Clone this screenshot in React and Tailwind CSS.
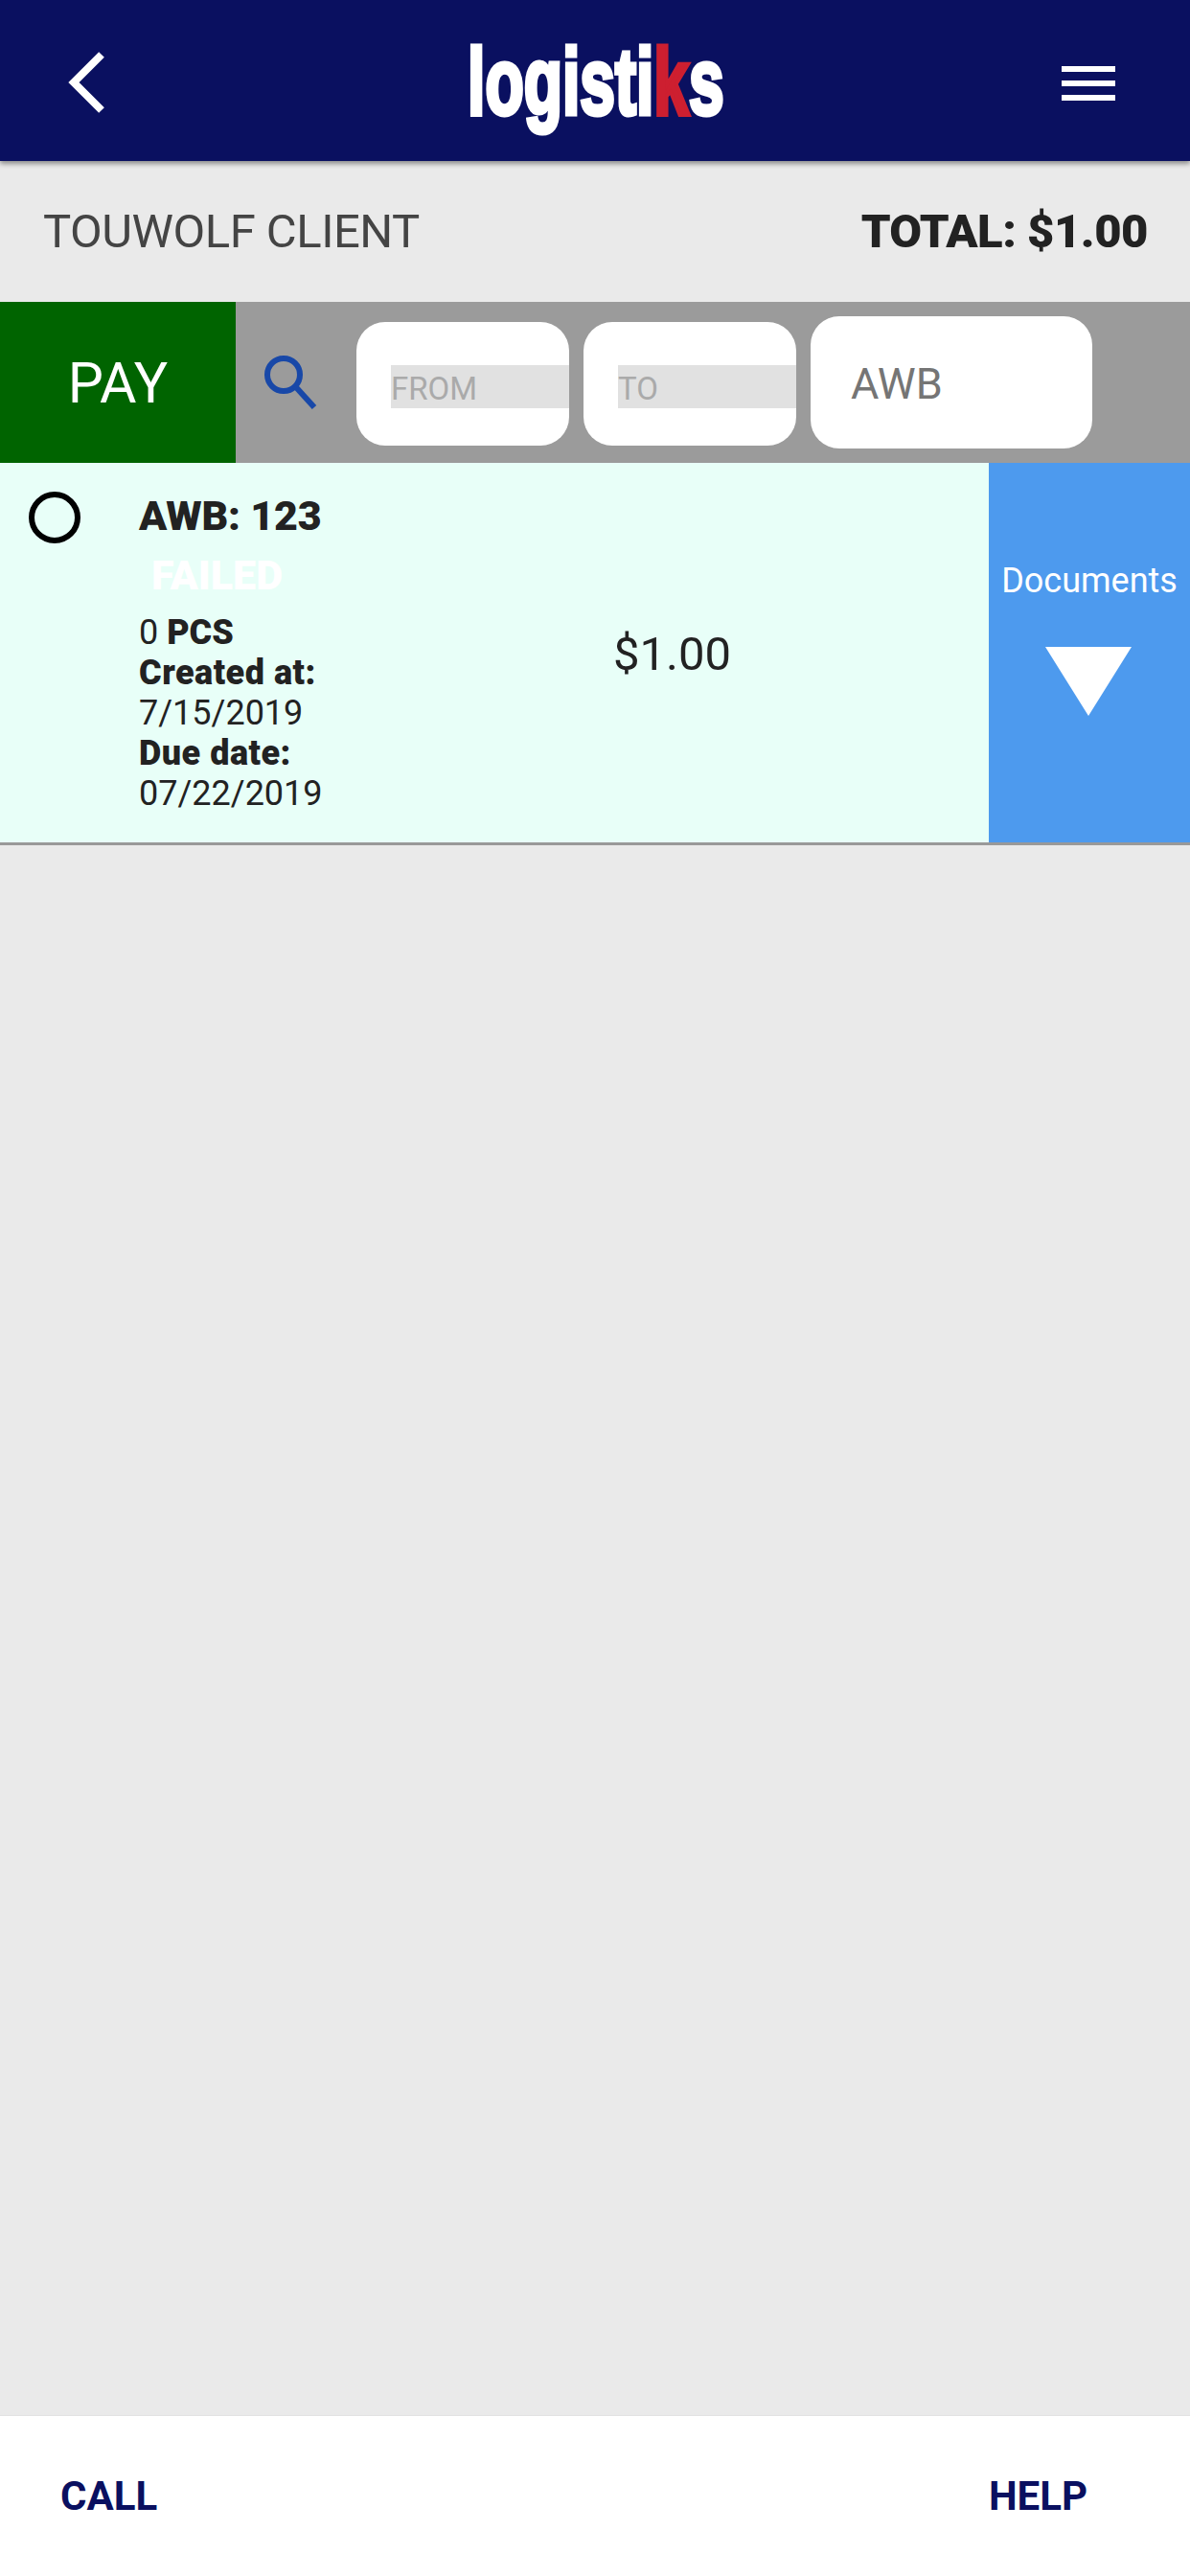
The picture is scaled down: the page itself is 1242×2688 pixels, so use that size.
import React from 'react';

const Logo = () => (
  <div className="w-[268px] ml-[10px] flex justify-center">
    <span className="shrink-0 whitespace-nowrap scale-x-[0.666] font-['Liberation_Sans',sans-serif] font-bold text-[99px] leading-none text-white [-webkit-text-stroke:5px_#ffffff]">
      logisti<span className="text-[#cd1f30] [-webkit-text-stroke:5px_#cd1f30]">k</span>s
    </span>
  </div>
);

const DateField = ({ label }) => (
  <div className="w-[222px] h-[129px] mt-[3px] bg-white rounded-[30px] flex items-center pl-[36px]">
    <div className="flex-1 h-[45px] mt-[6px] bg-[#e1e1e1] flex items-center text-[33px] leading-none text-[#aaaaaa]">
      <span className="pt-[4px]">{label}</span>
    </div>
  </div>
);

const App = () => {
  return (
    <div className="h-[2688px] flex flex-col bg-[#eaeaea] font-['Roboto',sans-serif] overflow-hidden">
      {/* Header */}
      <header className="relative h-[168px] shrink-0 bg-[#0a1060] shadow-[0_3px_5px_rgba(0,0,0,0.4)] grid grid-cols-[1fr_auto_1fr] items-center pl-[70px] pr-[78px]">
        <svg width="40" height="64" viewBox="0 0 40 64" fill="none" className="mt-[3px]">
          <path d="M36 3 L7 32 L36 61" stroke="white" strokeWidth="8" />
        </svg>
        <Logo />
        <div className="flex flex-col gap-[9px] mt-[6px] justify-self-end">
          <div className="w-[56px] h-[6px] bg-white" />
          <div className="w-[56px] h-[6px] bg-white" />
          <div className="w-[56px] h-[6px] bg-white" />
        </div>
      </header>

      {/* Client + total */}
      <div className="h-[147px] shrink-0 flex items-center justify-between pl-[45px] pr-[44px] text-[49px] leading-none">
        <span className="text-[#444444] tracking-[-0.5px]">TOUWOLF CLIENT</span>
        <span className="font-black text-[#222222] tracking-[-0.5px]">TOTAL: $1.00</span>
      </div>

      {/* Filters */}
      <div className="h-[168px] shrink-0 bg-[#9b9b9b] flex items-center">
        <div className="w-[246px] h-full bg-[#006400] flex items-center justify-center text-white text-[59px] leading-none">
          PAY
        </div>
        <svg width="56" height="56" viewBox="0 0 56 56" fill="none" className="ml-[29px] mr-[41px]">
          <circle cx="21" cy="20" r="17" stroke="#1848a8" strokeWidth="6" />
          <path d="M33 32 L53 54" stroke="#1848a8" strokeWidth="6" />
        </svg>
        <div className="flex items-center gap-[15px]">
          <DateField label="FROM" />
          <DateField label="TO" />
          <div className="w-[294px] h-[138px] bg-white rounded-[30px] flex items-center pl-[42px] pt-[3px] text-[45px] leading-none text-[#757575]">
            AWB
          </div>
        </div>
      </div>

      {/* Invoice row */}
      <div className="h-[399px] shrink-0 flex bg-[#e8fff8] border-b-[3px] border-[#999999]">
        <div className="w-[145px] shrink-0 pl-[30px] pt-[30px]">
          <div className="w-[54px] h-[54px] rounded-full border-[6px] border-black" />
        </div>
        <div className="w-[495px] shrink-0 pt-[31px] text-[36px] leading-[42px] text-[#222222]">
          <div className="font-black text-[43px] leading-[48px] tracking-[-0.2px]">AWB: 123</div>
          <div className="font-black text-[43px] leading-[48px] text-white mt-[14px] pl-[13px]">FAILED</div>
          <div className="mt-[15px]">0 <span className="font-black">PCS</span></div>
          <div className="font-black tracking-[0.5px]">Created at:</div>
          <div>7/15/2019</div>
          <div className="font-black tracking-[0.5px]">Due date:</div>
          <div>07/22/2019</div>
        </div>
        <div className="flex-1 flex items-center text-[49px] leading-none text-[#222222]">
          <span className="mt-[2px]">$1.00</span>
        </div>
        <div className="w-[210px] shrink-0 bg-[#4d9aee] flex flex-col items-center pt-[102px] text-white">
          <div className="text-[36px] leading-[42px]">Documents</div>
          <svg width="90" height="72" viewBox="0 0 90 72" className="mt-[48px] mr-[2px]">
            <path d="M0 0 H90 L45 72 Z" fill="white" />
          </svg>
        </div>
      </div>

      <div className="flex-1" />

      {/* Footer */}
      <footer className="h-[168px] shrink-0 bg-white border-t border-[#e2e2e2] flex items-center justify-between pl-[63px] pr-[107px] text-[42px] leading-none font-bold text-[#0a1060]">
        <span>CALL</span>
        <span>HELP</span>
      </footer>
    </div>
  );
};

export default App;
